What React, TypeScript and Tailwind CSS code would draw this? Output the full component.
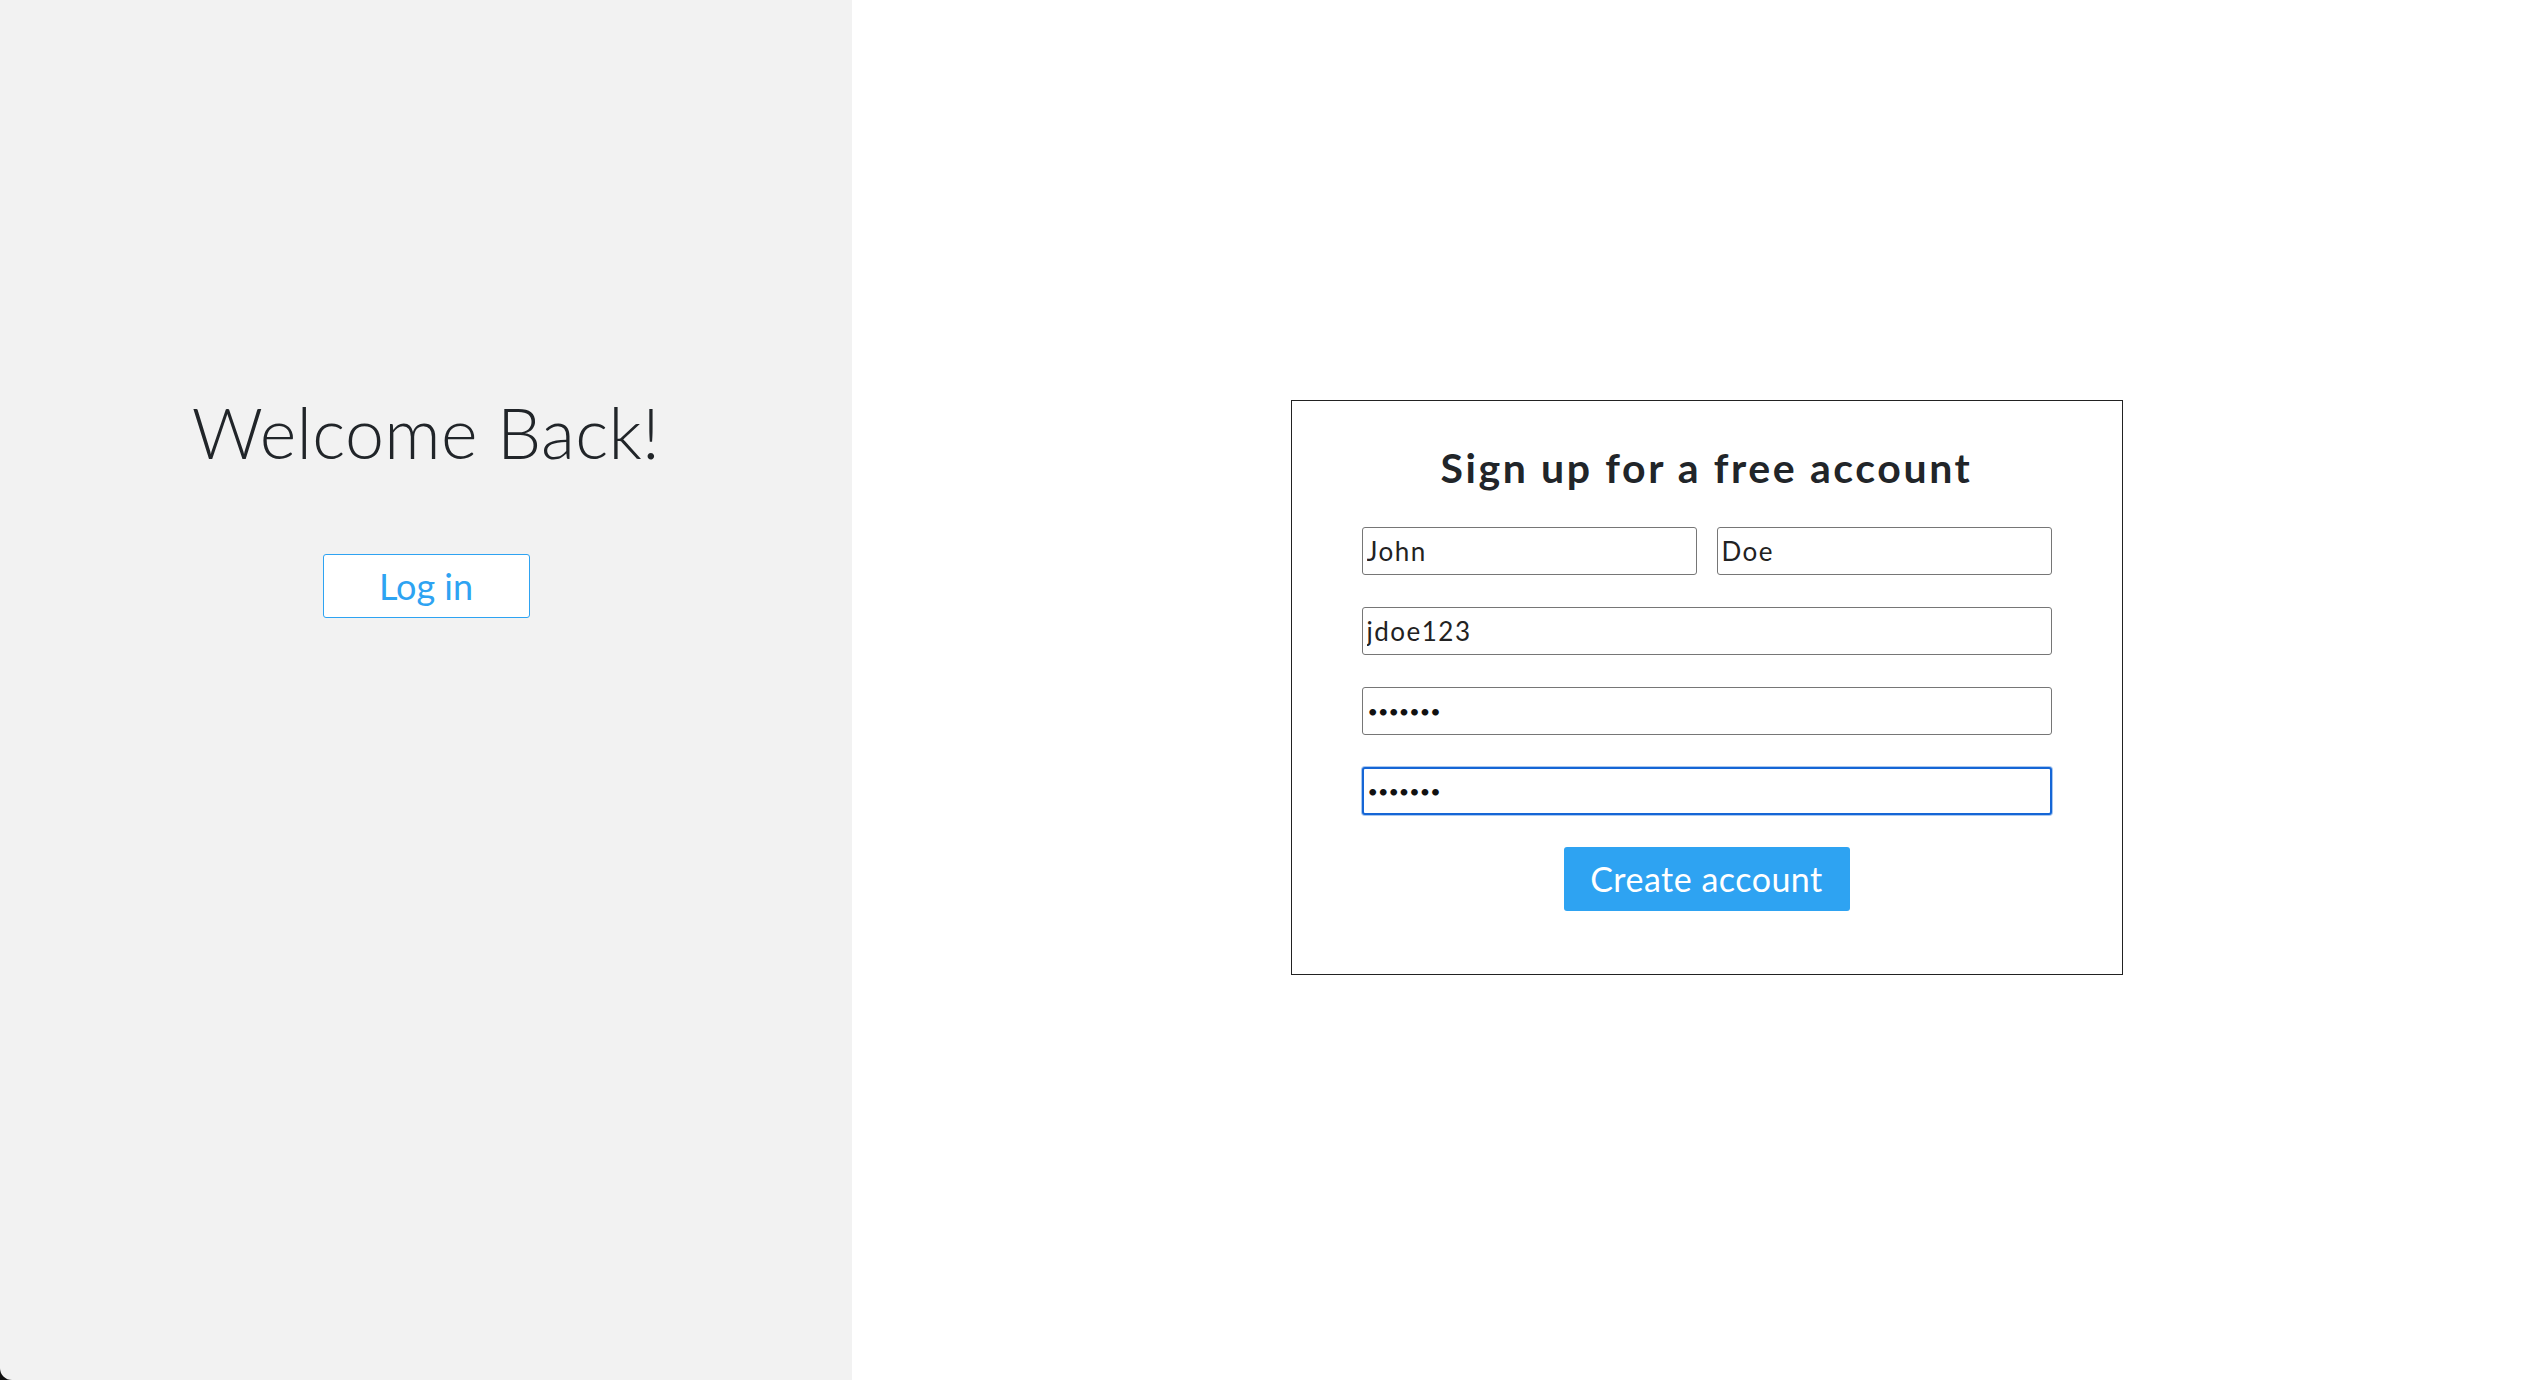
import React from "react";

export default function App() {
  const inputBase =
    "h-[48px] w-full bg-white rounded-[3px] border border-[#767676] pl-[4px] text-[26px] tracking-[1.5px] text-[#222] outline-none font-['Lato',sans-serif]";
  return (
    <div className="relative flex w-full h-[1380px] font-['Lato',sans-serif] text-[#212529] overflow-hidden">
      <div className="w-[852px] shrink-0 bg-[#f2f2f2] flex flex-col items-center pt-[390px]">
        <h1 className="text-[70px] leading-[84px] font-light tracking-[0.3px]">Welcome Back!</h1>
        <button className="mt-[80px] w-[207px] h-[64px] border border-[#2ea3f2] rounded-[3px] bg-white text-[#2ea3f2] text-[36px] leading-none">
          Log in
        </button>
      </div>
      <div className="flex-1 flex items-center justify-center bg-white">
        <div className="ml-[13px] mb-[5px] w-[832px] h-[575px] border border-[#222] bg-white flex flex-col pt-[45px] px-[70px]">
          <h2 className="text-[41px] leading-[44px] font-bold text-center tracking-[2.6px]">
            Sign up for a free account
          </h2>
          <div className="mt-[37px] flex flex-col gap-[32px]">
            <div className="flex gap-[20px]">
              <input className={inputBase} value="John" readOnly />
              <input className={inputBase} value="Doe" readOnly />
            </div>
            <input className={inputBase} value="jdoe123" readOnly />
            <input
              className="h-[48px] w-full bg-white rounded-[3px] border border-[#767676] pl-[5px] text-[18px] text-[#111] outline-none font-['Lato',sans-serif]"
              value="•••••••"
              readOnly
            />
            <input
              className="h-[48px] w-full bg-white rounded-[3px] border-2 border-[#1566d6] pl-[4px] text-[18px] text-[#111] outline-none shadow-[0_0_0_1px_#a9c8f0] font-['Lato',sans-serif]"
              value="•••••••"
              readOnly
            />
            <div className="flex justify-center">
              <button className="w-[286px] h-[64px] bg-[#2ea3f2] text-white text-[34px] tracking-[0.5px] rounded-[3px] leading-none">
                Create account
              </button>
            </div>
          </div>
        </div>
      </div>
      <div className="absolute left-0 bottom-0 w-[12px] h-[12px] bg-[#111]">
        <div className="w-full h-full bg-[#f2f2f2] rounded-bl-[12px]" />
      </div>
    </div>
  );
}
